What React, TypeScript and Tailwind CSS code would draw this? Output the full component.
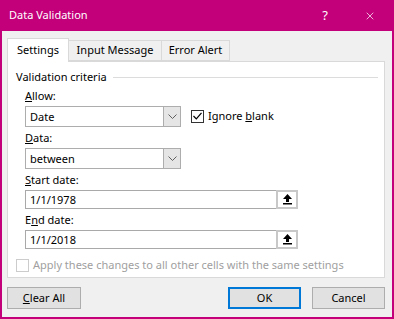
import { X } from 'lucide-react';

function Combo({ value }: { value: string }) {
  return (
    <div className="flex h-[21px] w-[156px] border border-[#adadad] bg-white">
      <div className="flex-1 pl-[4px] leading-[19px]">{value}</div>
      <div className="flex w-[17px] items-center justify-center border-l border-[#adadad] bg-[#e5e5e5]">
        <svg width="9" height="5" viewBox="0 0 9 5" fill="none" stroke="#606060" strokeWidth="1">
          <path d="M0.5 0.5 L4.5 4.5 L8.5 0.5" />
        </svg>
      </div>
    </div>
  );
}

function RefInput({ value }: { value: string }) {
  return (
    <div className="flex h-[19px] w-[273px] border border-[#a9a9a9] bg-white">
      <div className="flex-1 pl-[4px] leading-[17px]">{value}</div>
      <div className="-my-px -mr-px flex w-[22px] items-center justify-center border-2 border-[#c8c8c8] bg-white">
        <svg width="9" height="11" viewBox="0 0 9 11" fill="#000">
          <path d="M4.5 0 L9 5 L6 5 L6 8 L3 8 L3 5 L0 5 Z" />
          <rect x="0" y="9" width="9" height="1.5" />
        </svg>
      </div>
    </div>
  );
}

export default function App() {
  return (
    <div
      className="flex h-[319px] w-[394px] flex-col border-x-2 border-b-2 border-[#c3007a] bg-[#f0f0f0] text-[11px] text-black"
      style={{ fontFamily: '"Noto Sans", sans-serif' }}
    >
      {/* Title bar */}
      <div className="-mx-[2px] flex h-[31px] shrink-0 items-center bg-[#c3007a] pl-[9px] text-white">
        <span className="flex-1 text-[11px]">Data Validation</span>
        <span className="mr-[36px] text-[13px]">?</span>
        <X className="mr-[18px] h-[12px] w-[12px]" strokeWidth={1.4} />
      </div>

      {/* Tabs */}
      <div className="ml-[5px] mt-[7px] flex items-end">
        <div className="relative z-10 -mb-px flex h-[24px] w-[62px] items-center justify-center border border-b-0 border-[#d9d9d9] bg-white">
          Settings
        </div>
        <div className="flex h-[21px] w-[93px] items-center justify-center border border-l-0 border-[#d9d9d9] bg-[#f0f0f0]">
          Input Message
        </div>
        <div className="flex h-[21px] w-[68px] items-center justify-center border border-l-0 border-[#d9d9d9] bg-[#f0f0f0]">
          Error Alert
        </div>
      </div>

      {/* Panel */}
      <div className="ml-[5px] h-[217px] w-[378px] shrink-0 border border-[#d9d9d9] bg-white pl-[8px] pt-[7px]">
        <div className="flex h-[16px] items-center">
          <span>Validation criteria</span>
          <div className="ml-[6px] mr-[6px] h-px flex-1 bg-[#dcdcdc]" />
        </div>

        <div className="ml-[9px] mt-[3px]">
          <div className="leading-[16px]">
            <u>A</u>llow:
          </div>
          <div className="mt-[2px] flex items-start">
            <Combo value="Date" />
            <div className="ml-[10px] mt-[2px] flex items-center">
              <div className="flex h-[13px] w-[13px] items-center justify-center border border-[#333] bg-white">
                <svg width="9" height="8" viewBox="0 0 9 8" fill="none" stroke="#000" strokeWidth="1.2">
                  <path d="M0.5 4 L3.3 6.8 L8.5 0.8" />
                </svg>
              </div>
              <span className="ml-[4px]">
                Ignore <u>b</u>lank
              </span>
            </div>
          </div>

          <div className="mt-[3px] leading-[16px]">
            <u>D</u>ata:
          </div>
          <div className="mt-[2px]">
            <Combo value="between" />
          </div>

          <div className="mt-[3px] leading-[16px]">
            <u>S</u>tart date:
          </div>
          <div className="mt-[2px]">
            <RefInput value="1/1/1978" />
          </div>

          <div className="mt-[3px] leading-[16px]">
            E<u>n</u>d date:
          </div>
          <div className="mt-[2px]">
            <RefInput value="1/1/2018" />
          </div>
        </div>

        <div className="mt-[8px] flex items-center text-[#a0a0a0]">
          <div className="h-[13px] w-[13px] border border-[#cccccc] bg-white" />
          <span className="ml-[4px]">Apply these changes to all other cells with the same settings</span>
        </div>
      </div>

      {/* Buttons */}
      <div className="ml-[5px] mt-[9px] flex">
        <button className="h-[22px] w-[74px] border border-[#adadad] bg-[#e1e1e1]">
          <u>C</u>lear All
        </button>
        <div className="flex-1" />
        <button className="h-[22px] w-[73px] border-2 border-[#0078d7] bg-[#e1e1e1]">OK</button>
        <button className="ml-[11px] mr-[7px] h-[22px] w-[73px] border border-[#adadad] bg-[#e1e1e1]">
          Cancel
        </button>
      </div>
    </div>
  );
}
